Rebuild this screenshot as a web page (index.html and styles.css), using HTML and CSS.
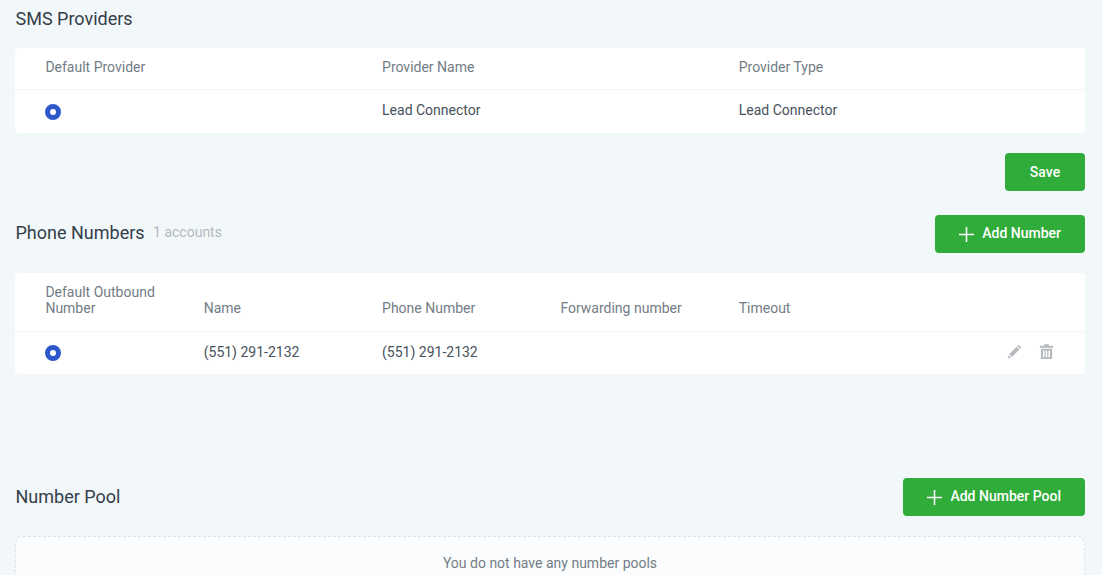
FILE: index.html
```html
<!DOCTYPE html>
<html lang="en">
<head>
<meta charset="utf-8">
<title>Phone Settings</title>
<link rel="stylesheet" href="styles.css">
</head>
<body>
<main class="page">
  <section class="sms">
    <h2 class="title sms-title">SMS Providers</h2>
    <table class="table thirds">
      <thead>
        <tr><th>Default Provider</th><th>Provider Name</th><th>Provider Type</th></tr>
      </thead>
      <tbody>
        <tr><td><span class="radio"></span></td><td>Lead Connector</td><td>Lead Connector</td></tr>
      </tbody>
    </table>
    <div class="actions"><button class="btn save">Save</button></div>
  </section>

  <section class="numbers">
    <div class="head">
      <div class="head-left"><h2 class="title">Phone Numbers</h2><span class="count">1 accounts</span></div>
      <button class="btn add">
        <svg class="plus" viewBox="0 0 15 15"><path d="M7.500 0v15M0 7.500h15"/></svg>Add Number
      </button>
    </div>
    <table class="table sixths">
      <thead>
        <tr class="tall"><th>Default Outbound<br>Number</th><th>Name</th><th>Phone Number</th><th>Forwarding number</th><th>Timeout</th><th></th></tr>
      </thead>
      <tbody>
        <tr>
          <td><span class="radio"></span></td><td>(551) 291-2132</td><td>(551) 291-2132</td><td></td><td></td>
          <td class="tools">
            <svg class="tool" viewBox="0 0 16 16"><path d="M12.300.8l3 3-1.300 1.300-3-3zM10.200 2.900l3 3-8 8-3-3zM1.500 11.900l2.700 2.700-3.600.9z"/></svg>
            <svg class="tool" viewBox="0 0 16 16"><path fill-rule="evenodd" d="M5.500.3h5v1.500h4.500v2.200H1V1.800h4.500zM2 5h12v11H2zM4.300 7v7h1.600V7zm2.900 0v7h1.600V7zm2.900 0v7h1.600V7z"/></svg>
          </td>
        </tr>
      </tbody>
    </table>
  </section>

  <section class="pool">
    <div class="head">
      <h2 class="title">Number Pool</h2>
      <button class="btn add">
        <svg class="plus" viewBox="0 0 15 15"><path d="M7.500 0v15M0 7.500h15"/></svg>Add Number Pool
      </button>
    </div>
    <div class="empty">You do not have any number pools</div>
  </section>
</main>
</body>
</html>
```
FILE: styles.css
```css
* { box-sizing: border-box; }

html, body { height: 100%; overflow: hidden; }

body {
  margin: 0;
  background: #f2f7fa;
  font-family: Roboto, "Liberation Sans", sans-serif;
  color: #2d3748;
}

.page { padding: 0 17px 0 15px; }

.title {
  margin: 0;
  padding-left: 0.5px;
  font-size: 18px;
  font-weight: 400;
  line-height: 24px;
  color: #333e49;
}

.sms { padding-top: 7px; }
.sms-title { margin-bottom: 17px; }

.table {
  width: 100%;
  table-layout: fixed;
  border-collapse: separate;
  border-spacing: 0;
  background: #fff;
  border-radius: 4px;
  font-size: 14px;
}

.table th {
  height: 42px;
  padding: 0 10.4px 3px;
  font-weight: 400;
  text-align: left;
  line-height: 16px;
  color: #737c85;
  border-bottom: 1px solid #f2f6f8;
  vertical-align: middle;
}

.table td {
  height: 43px;
  padding: 0 10.4px 3px;
  color: #47515b;
  vertical-align: middle;
}

.table th:first-child, .table td:first-child { padding-left: 30.4px; }

.tall th {
  height: 59px;
  padding-top: 10px;
  padding-bottom: 15px;
  vertical-align: bottom;
}

.tall th:first-child { padding-right: 0; }
.sixths tbody td { height: 42px; }

.radio {
  display: block;
  width: 16px;
  height: 16px;
  margin-top: 3px;
  border: 5px solid #2c58cc;
  border-radius: 50%;
  background: #fff;
}

.actions {
  display: flex;
  justify-content: flex-end;
  margin-top: 20px;
}

.btn {
  display: inline-flex;
  align-items: center;
  justify-content: center;
  height: 38px;
  padding-bottom: 2px;
  border: 0;
  border-radius: 4px;
  background: #30ac3b;
  color: #fff;
  font: 500 14px/20px Roboto, "Liberation Sans", sans-serif;
}

.save { width: 80px; }
.add { padding: 0 24px 2px; gap: 8px; }

.plus {
  width: 15px;
  height: 15px;
  margin-top: 2px;
  fill: none;
  stroke: #fff;
  stroke-width: 1.6;
}

.numbers { margin-top: 24px; }

.head {
  display: flex;
  justify-content: space-between;
  align-items: center;
}

.numbers .head { margin-bottom: 20px; }

.head-left {
  display: flex;
  align-items: center;
  gap: 8.5px;
  padding-bottom: 2px;
}

.count {
  margin-bottom: 2px;
  font-size: 14px;
  color: #b3b9bf;
}

.tools {
  text-align: right;
  white-space: nowrap;
  font-size: 0;
  padding-right: 31px !important;
}

.tool {
  width: 15px;
  height: 15px;
  fill: #b6babe;
  margin-left: 17px;
}

.pool { margin-top: 104px; }

.empty {
  margin-top: 20px;
  height: 80px;
  padding-top: 17px;
  border: 1px dashed #dde4e9;
  border-radius: 8px;
  background: #fafcfd;
  text-align: center;
  font-size: 14px;
  line-height: 18px;
  color: #737c85;
}
```
